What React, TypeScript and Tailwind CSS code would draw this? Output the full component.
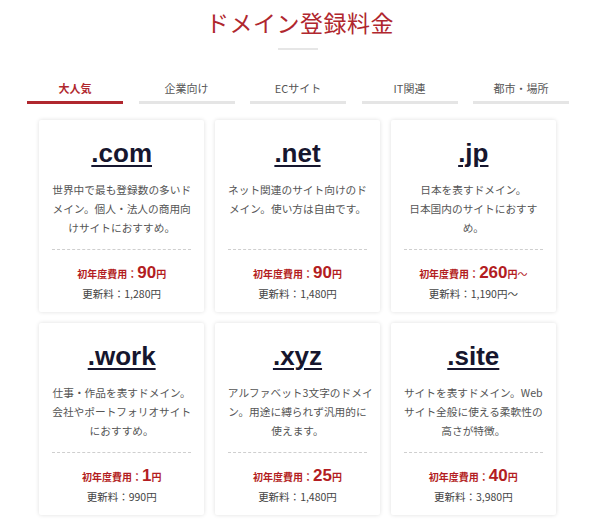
import React from 'react';

interface Domain {
  tld: string;
  lines: string[];
  price: string;
  suffix?: string;
  renewal: string;
}

const domains: Domain[] = [
  { tld: '.com', lines: ['世界中で最も登録数の多いド', 'メイン。個人・法人の商用向', 'けサイトにおすすめ。'], price: '90', renewal: '1,280円' },
  { tld: '.net', lines: ['ネット関連のサイト向けのド', 'メイン。使い方は自由です。'], price: '90', renewal: '1,480円' },
  { tld: '.jp', lines: ['日本を表すドメイン。', '日本国内のサイトにおすす', 'め。'], price: '260', suffix: '～', renewal: '1,190円～' },
  { tld: '.work', lines: ['仕事・作品を表すドメイン。', '会社やポートフォリオサイト', 'におすすめ。'], price: '1', renewal: '990円' },
  { tld: '.xyz', lines: ['アルファベット3文字のドメイ', 'ン。用途に縛られず汎用的に', '使えます。'], price: '25', renewal: '1,480円' },
  { tld: '.site', lines: ['サイトを表すドメイン。Web', 'サイト全般に使える柔軟性の', '高さが特徴。'], price: '40', renewal: '3,980円' },
];

const tabs = ['大人気', '企業向け', 'ECサイト', 'IT関連', '都市・場所'];

const jp = { fontFamily: '"Noto Sans CJK JP", "Noto Sans", sans-serif' };
const latin = { fontFamily: '"Liberation Sans", Arial, sans-serif' };

function DomainCard({ d }: { d: Domain }) {
  return (
    <div className="flex flex-col bg-white rounded-[2px] shadow-[0_0_4px_rgba(0,0,0,0.13)] pt-[18px] px-[13px] pb-[8px] text-center">
      <div className="text-[26px] leading-[30px] font-bold text-[#16162e] underline underline-offset-[3px] decoration-[2px]" style={latin}>
        {d.tld}
      </div>
      <div className="mt-[12px] h-[57px] text-[10.7px] leading-[19px] text-[#555]" style={jp}>
        {d.lines.map(l => (
          <div key={l} className="whitespace-nowrap">{l}</div>
        ))}
      </div>
      <div className="mt-[12px] border-t border-dashed border-[#cfcfcf]" />
      <div className="pt-[11px] h-[31px] leading-[20px] text-[#b31d22] font-bold">
        <span className="text-[10px]" style={jp}>初年度費用：</span>
        <span className="text-[17px]" style={latin}>{d.price}</span>
        <span className="text-[10px]" style={jp}>円</span>
        {d.suffix && <span className="text-[10px] font-normal" style={jp}>{d.suffix}</span>}
      </div>
      <div className="mt-[3px] leading-[20px] text-[10.5px] text-[#444]" style={jp}>
        更新料：{d.renewal}
      </div>
    </div>
  );
}

export default function App() {
  return (
    <div className="w-[600px] h-[526px] bg-white overflow-hidden pt-[5px]" style={jp}>
      <h1 className="text-center text-[23px] leading-[34px] text-[#b0272e] font-normal tracking-[0.5px]">
        ドメイン登録料金
      </h1>
      <div className="mx-auto mt-[9px] h-[2px] w-[40px] bg-[#e6e6e6] relative left-[-2px]" />

      <div className="ml-[27px] mt-[29px] flex gap-[15.5px]">
        {tabs.map((t, i) => (
          <div key={t} className="w-[96px] flex flex-col items-center">
            <span className={`text-[11px] leading-[18px] ${i === 0 ? 'text-[#b0272e] font-bold' : 'text-[#555]'}`}>
              {t}
            </span>
            <div className={`mt-[4px] w-full h-[3px] ${i === 0 ? 'bg-[#b0272e]' : 'bg-[#e5e5e5]'}`} />
          </div>
        ))}
      </div>

      <div className="ml-[39px] mt-[16px] w-[517px] grid grid-cols-3 gap-x-[10.5px] gap-y-[11px]">
        {domains.map(d => (
          <DomainCard key={d.tld} d={d} />
        ))}
      </div>
    </div>
  );
}
